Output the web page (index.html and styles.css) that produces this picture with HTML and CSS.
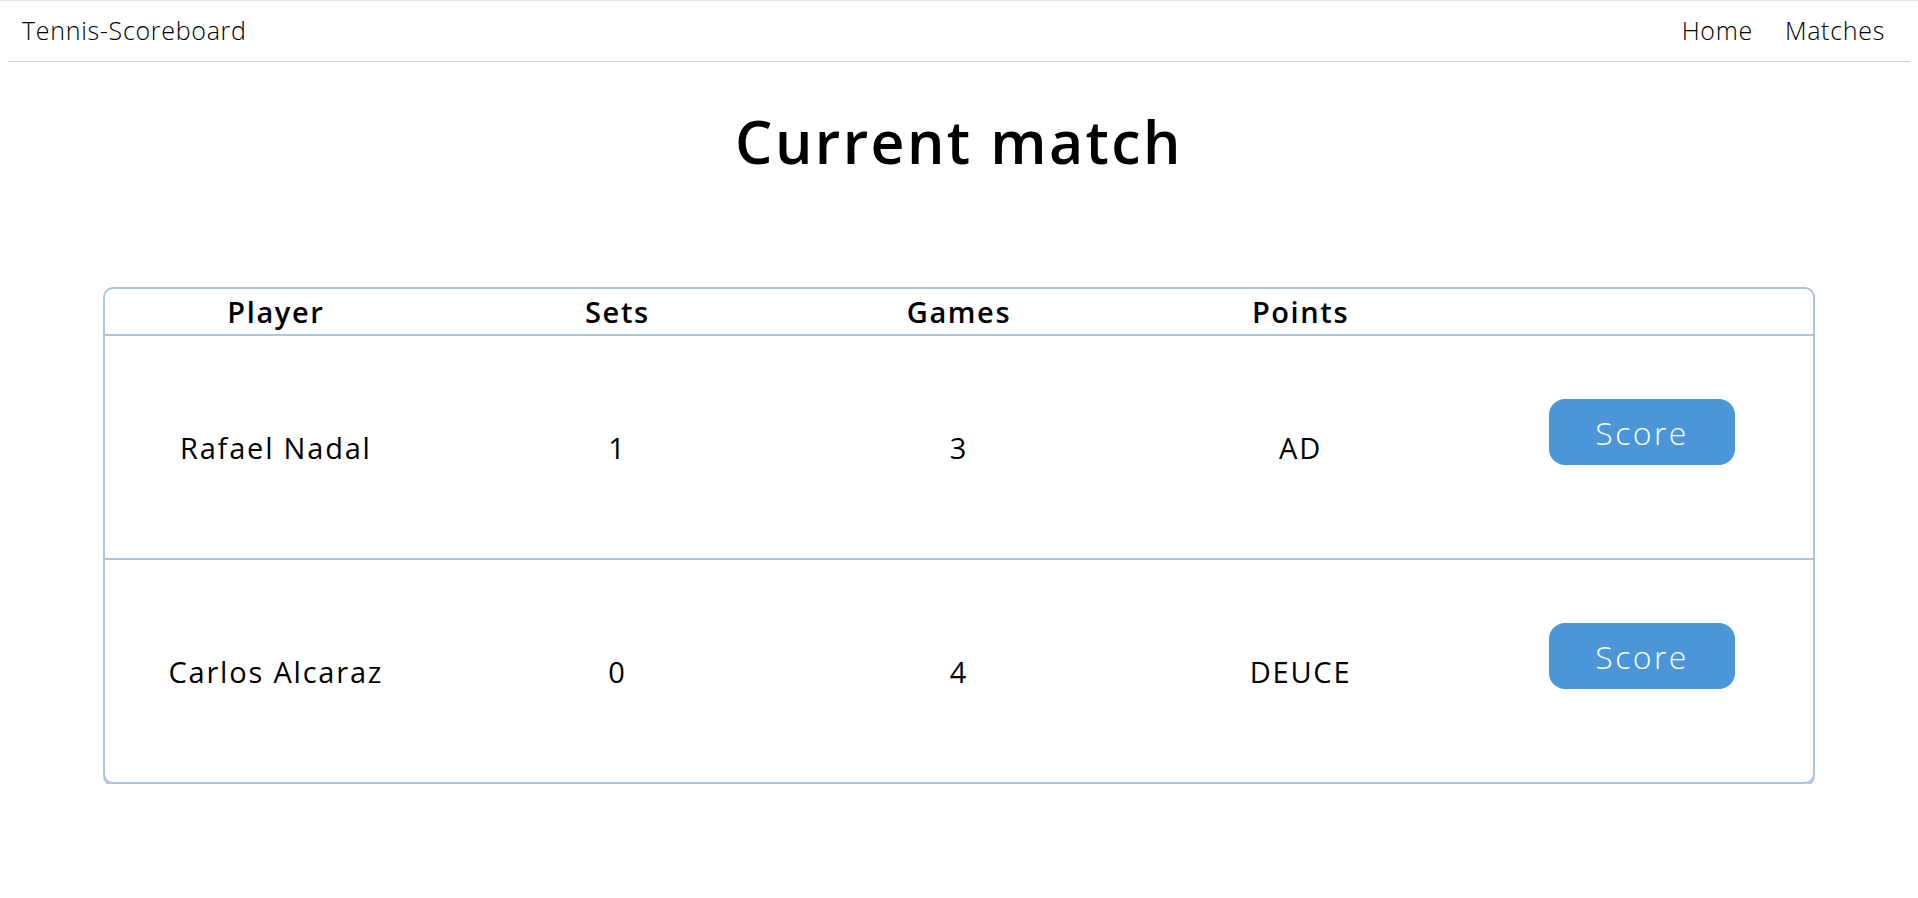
FILE: index.html
```html
<!DOCTYPE html>
<html lang="en">
<head>
<meta charset="utf-8">
<title>Tennis-Scoreboard</title>
<link rel="stylesheet" href="styles.css">
</head>
<body>
<nav class="nav">
  <a class="brand" href="#">Tennis-Scoreboard</a>
  <div class="links">
    <a class="link" href="#">Home</a>
    <a class="link" href="#">Matches</a>
  </div>
</nav>
<main class="main">
  <h1 class="title">Current match</h1>
  <table class="score-table">
    <thead>
      <tr>
        <th>Player</th>
        <th>Sets</th>
        <th>Games</th>
        <th>Points</th>
        <th></th>
      </tr>
    </thead>
    <tbody>
      <tr class="first-row">
        <td>Rafael Nadal</td>
        <td>1</td>
        <td>3</td>
        <td>AD</td>
        <td><button class="score-btn" type="button">Score</button></td>
      </tr>
      <tr>
        <td>Carlos Alcaraz</td>
        <td>0</td>
        <td>4</td>
        <td>DEUCE</td>
        <td><button class="score-btn" type="button">Score</button></td>
      </tr>
    </tbody>
  </table>
</main>
</body>
</html>
```

FILE: styles.css
```css
html {
  border-top: 1px solid #e6e2ec;
}
body {
  margin: 8px;
  font-family: "Open Sans", "DejaVu Sans", sans-serif;
  color: #000;
  background: #fff;
}
.nav {
  display: flex;
  justify-content: space-between;
  align-items: center;
  padding: 4px 25px 14px 14px;
  border-bottom: 1px solid #c9d1d9;
}
.brand, .link {
  font-weight: 300;
  font-size: 25px;
  line-height: 34px;
  letter-spacing: 0.7px;
  color: #000;
  text-decoration: none;
}
.links {
  display: flex;
  gap: 32px;
}
.title {
  margin: 40px 0 0;
  text-align: center;
  font-size: 59px;
  font-weight: 600;
  line-height: 79px;
  letter-spacing: 2.4px;
}
.score-table {
  width: 90%;
  margin: 106px auto 0;
  table-layout: fixed;
  border-collapse: separate;
  border-spacing: 0;
  border: 2px solid #abc5dc;
  border-radius: 10px;
  box-shadow: 0 2px 0 #abc5dc;
  font-size: 29px;
  letter-spacing: 1.8px;
}
.score-table th {
  font-weight: 600;
  height: 45px;
  padding: 0;
  line-height: 41px;
  text-align: center;
  letter-spacing: 1.6px;
  border-bottom: 2px solid #abc5dc;
}
.score-table td {
  height: 222px;
  padding: 0;
  text-align: center;
  vertical-align: middle;
  font-weight: 400;
}
.first-row td {
  border-bottom: 2px solid #abc5dc;
}
.score-btn {
  width: 186px;
  height: 66px;
  margin-bottom: 30px;
  border: none;
  border-radius: 16px;
  background: #4a96d9;
  color: #fff;
  font-family: "Open Sans", "DejaVu Sans", sans-serif;
  font-weight: 300;
  font-size: 32px;
  letter-spacing: 2.4px;
  cursor: pointer;
}
```
